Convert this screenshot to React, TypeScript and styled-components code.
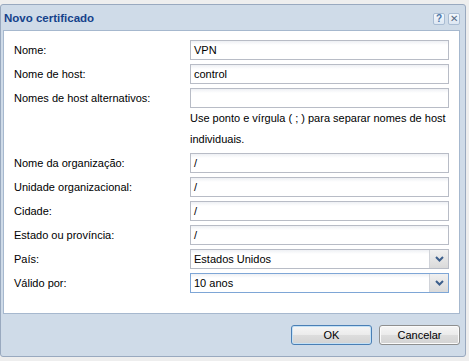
import React from 'react';
import styled, { createGlobalStyle } from 'styled-components';

const GlobalStyle = createGlobalStyle`
  html, body {
    margin: 0;
    padding: 0;
    background: #eeeeee;
  }
  body {
    font-family: "Liberation Sans", Arial, sans-serif;
    font-size: 11px;
    color: #000000;
  }
`;

const Page = styled.div`
  width: 469px;
  height: 361px;
  padding-top: 4px;
  box-sizing: border-box;
`;

const Dialog = styled.div`
  width: 466px;
  height: 353px;
  box-sizing: border-box;
  border: 1px solid #99a9bf;
  border-radius: 3px;
  background: #cfdbe8;
  padding: 0 5px 0 2px;
  display: flex;
  flex-direction: column;
`;

const Header = styled.div`
  height: 25px;
  display: flex;
  align-items: center;
  justify-content: space-between;
  padding: 0 0 0 1px;
`;

const Title = styled.div`
  font-weight: bold;
  font-size: 11.5px;
  color: #15428b;
`;

const Tools = styled.div`
  display: flex;
  gap: 3px;
  margin-top: 2px;
`;

const Tool = styled.div<{ $kind: 'help' | 'close' }>`
  width: 12px;
  height: 12px;
  box-sizing: border-box;
  border: 1px solid #a9bcd3;
  border-radius: 2px;
  background: linear-gradient(#f4f8fc, #dde7f3);
  display: flex;
  align-items: center;
  justify-content: center;
  font-size: 10px;
  line-height: 1;
  font-weight: ${p => (p.$kind === 'help' ? 'bold' : 'normal')};
  color: ${p => (p.$kind === 'help' ? '#4a74a8' : '#566a84')};
`;

const Panel = styled.div`
  height: 284px;
  box-sizing: border-box;
  background: #ffffff;
  border: 1px solid #a6b8ce;
  padding: 9px 10px 0 10px;
  display: flex;
  flex-direction: column;
  gap: 4px;
`;

const Row = styled.div`
  display: grid;
  grid-template-columns: 176px 259px;
  align-items: center;
  height: 20px;
`;

const Label = styled.div`
  white-space: nowrap;
`;

const Field = styled.div<{ $focused?: boolean }>`
  height: 20px;
  box-sizing: border-box;
  border: 1px solid ${p => (p.$focused ? '#7ea6d6' : '#b8bcc6')};
  background: linear-gradient(#eef0f4 0, #ffffff 4px, #ffffff 100%);
  display: flex;
  align-items: center;
  padding-left: 3px;
  overflow: hidden;
  white-space: nowrap;
`;

const FieldText = styled.span`
  flex: 1;
`;

const Arrow = styled.div`
  width: 18px;
  height: 18px;
  background: linear-gradient(#f0f0f0, #dadada);
  border-left: 1px solid #d0d3d9;
  display: flex;
  align-items: center;
  justify-content: center;
`;

const Hint = styled.div`
  margin: -4px 0 -1px 176px;
  line-height: 21px;
  white-space: nowrap;
`;

const Footer = styled.div`
  flex: 1;
  display: flex;
  justify-content: flex-end;
  align-items: flex-start;
  padding-top: 11px;
  gap: 7px;
`;

const Button = styled.button<{ $primary?: boolean }>`
  width: 81px;
  height: 20px;
  box-sizing: border-box;
  border: 1px solid ${p => (p.$primary ? '#4a7fb5' : '#8e8f8f')};
  border-radius: 3px;
  background: linear-gradient(#f6f6f6 0%, #ebebeb 50%, #dddddd 50%, #d3d3d3 100%);
  box-shadow: inset 0 0 0 1px ${p => (p.$primary ? '#c4e1f6' : '#fbfbfb')};
  font-family: "Liberation Sans", Arial, sans-serif;
  font-size: 11px;
  color: #000000;
  padding: 0;
`;

const Chevron = () => (
  <svg width="9" height="6" viewBox="0 0 9 6">
    <path d="M1 1 L4.5 4.5 L8 1" fill="none" stroke="#3d5f8c" strokeWidth="2" />
  </svg>
);

const textFields = [
  { label: 'Nome:', value: 'VPN' },
  { label: 'Nome de host:', value: 'control' },
  { label: 'Nomes de host alternativos:', value: '' },
];

const orgFields = [
  { label: 'Nome da organização:', value: '/' },
  { label: 'Unidade organizacional:', value: '/' },
  { label: 'Cidade:', value: '/' },
  { label: 'Estado ou província:', value: '/' },
];

const App = () => {
  return (
    <Page>
      <GlobalStyle />
      <Dialog>
        <Header>
          <Title>Novo certificado</Title>
          <Tools>
            <Tool $kind="help">?</Tool>
            <Tool $kind="close">✕</Tool>
          </Tools>
        </Header>
        <Panel>
          {textFields.map(f => (
            <Row key={f.label}>
              <Label>{f.label}</Label>
              <Field><FieldText>{f.value}</FieldText></Field>
            </Row>
          ))}
          <Hint>
            Use ponto e vírgula ( ; ) para separar nomes de host
            <br />
            individuais.
          </Hint>
          {orgFields.map(f => (
            <Row key={f.label}>
              <Label>{f.label}</Label>
              <Field><FieldText>{f.value}</FieldText></Field>
            </Row>
          ))}
          <Row>
            <Label>País:</Label>
            <Field>
              <FieldText>Estados Unidos</FieldText>
              <Arrow><Chevron /></Arrow>
            </Field>
          </Row>
          <Row>
            <Label>Válido por:</Label>
            <Field $focused>
              <FieldText>10 anos</FieldText>
              <Arrow><Chevron /></Arrow>
            </Field>
          </Row>
        </Panel>
        <Footer>
          <Button $primary>OK</Button>
          <Button>Cancelar</Button>
        </Footer>
      </Dialog>
    </Page>
  );
};

export default App;
